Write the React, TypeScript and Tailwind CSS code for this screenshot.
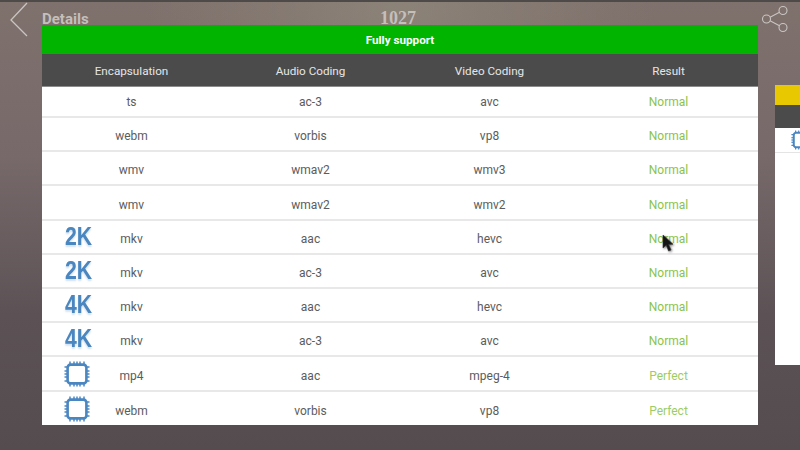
type Row = {
  badge?: '2K' | '4K' | 'chip'
  enc: string
  audio: string
  video: string
  result: string
}

const rows: Row[] = [
  { enc: 'ts', audio: 'ac-3', video: 'avc', result: 'Normal' },
  { enc: 'webm', audio: 'vorbis', video: 'vp8', result: 'Normal' },
  { enc: 'wmv', audio: 'wmav2', video: 'wmv3', result: 'Normal' },
  { enc: 'wmv', audio: 'wmav2', video: 'wmv2', result: 'Normal' },
  { badge: '2K', enc: 'mkv', audio: 'aac', video: 'hevc', result: 'Normal' },
  { badge: '2K', enc: 'mkv', audio: 'ac-3', video: 'avc', result: 'Normal' },
  { badge: '4K', enc: 'mkv', audio: 'aac', video: 'hevc', result: 'Normal' },
  { badge: '4K', enc: 'mkv', audio: 'ac-3', video: 'avc', result: 'Normal' },
  { badge: 'chip', enc: 'mp4', audio: 'aac', video: 'mpeg-4', result: 'Perfect' },
  { badge: 'chip', enc: 'webm', audio: 'vorbis', video: 'vp8', result: 'Perfect' },
]

function Chip({ size = 26 }: { size?: number }) {
  const pins = [6, 10, 13, 16, 20]
  return (
    <svg width={size} height={size} viewBox="0 0 26 26" fill="none" stroke="#4a86c0">
      <rect x="3.6" y="3.6" width="18.8" height="18.8" rx="3" strokeWidth="2.6" />
      {pins.map((p) => (
        <g key={p} strokeWidth="1.5">
          <line x1={p} y1="0.5" x2={p} y2="3" />
          <line x1={p} y1="23" x2={p} y2="25.5" />
          <line x1="0.5" y1={p} x2="3" y2={p} />
          <line x1="23" y1={p} x2="25.5" y2={p} />
        </g>
      ))}
    </svg>
  )
}

function Badge({ kind }: { kind: Row['badge'] }) {
  if (!kind) return null
  return (
    <div className="absolute left-[22px] top-0 h-full flex items-center">
      {kind === 'chip' ? (
        <Chip />
      ) : (
        <span className="w-[26px] -ml-[1px] -mt-[1px] text-center text-[25px] leading-none font-bold scale-x-[0.85] text-[#4a86c0] font-['Liberation_Sans',sans-serif] [text-shadow:0_2px_2px_rgba(74,134,192,0.25)]">
          {kind}
        </span>
      )}
    </div>
  )
}

export default function App() {
  return (
    <div className="relative w-[800px] h-[450px] overflow-hidden font-['Roboto',sans-serif] bg-[#5b5053] bg-[linear-gradient(180deg,#7f716c_0%,#77696a_35%,#5c5255_70%,#544c4f_100%)]">
      <div className="absolute inset-0 bg-[radial-gradient(ellipse_at_50%_0%,rgba(150,145,130,0.55)_0%,rgba(150,145,130,0)_45%)]" />
      <div className="absolute inset-x-0 top-0 h-[2px] bg-[#4f4a4a]" />

      <div className="relative flex h-[50px] items-start">
        <svg width="20" height="36" viewBox="0 0 20 36" fill="none" stroke="#c9c5c2" strokeWidth="1.3" className="ml-[9px] mt-[2px]">
          <path d="M18 1 L2 18 L18 34" />
        </svg>
        <span className="ml-[13px] mt-[10px] text-[15px] leading-[18px] font-bold text-[#c4bfbb]">Details</span>
        <span className="absolute left-[380px] top-[8px] text-[18px] leading-[20px] font-bold text-[#c4bfbb] font-['Liberation_Serif',serif]">1027</span>
        <svg width="30" height="30" viewBox="0 0 30 30" fill="none" stroke="#c9c5c2" strokeWidth="1.1" className="absolute left-[759px] top-[4px]">
          <circle cx="24" cy="6.5" r="4" />
          <circle cx="7.5" cy="15" r="4" />
          <circle cx="24" cy="23.5" r="4" />
          <path d="M11 13.2 L20.5 8.3 M11 16.8 L20.5 21.7" />
        </svg>
      </div>

      <div className="absolute left-[775px] top-[85px] w-[25px] h-[280px] flex flex-col bg-white">
        <div className="h-[20px] bg-[#e8c800]" />
        <div className="h-[23px] bg-[#4b4b4b]" />
        <div className="h-[25px] pl-[16px] pt-[2px] border-b border-[#e4e4e4]">
          <Chip size={20} />
        </div>
      </div>

      <div className="absolute left-[42px] top-[25px] w-[716px] h-[400px] flex flex-col bg-white">
        <div className="h-[29px] shrink-0 pt-[3px] bg-[#00b400] flex items-center justify-center text-[11.7px] font-bold text-white">
          Fully support
        </div>
        <div className="h-[32.6px] shrink-0 pt-[3px] grid grid-cols-4 items-center bg-[#4b4b4b] border-b border-[#8c8c8c] text-[11.7px] text-[#e6e6e6] text-center">
          <div>Encapsulation</div>
          <div>Audio Coding</div>
          <div>Video Coding</div>
          <div>Result</div>
        </div>
        <div>
          {rows.map((r, i) => (
            <div key={i} className="relative h-[34.2px] first:h-[31.5px] pt-[4px] first:pt-[1px] grid grid-cols-4 items-center border-b-2 border-[#e8e8e8] last:border-b-0 text-[12px] text-[#5c5c5c] text-center">
              <Badge kind={r.badge} />
              <div>{r.enc}</div>
              <div>{r.audio}</div>
              <div>{r.video}</div>
              <div className={r.result === 'Perfect' ? 'text-[#9ccc65]' : 'text-[#8bc34a]'}>{r.result}</div>
            </div>
          ))}
        </div>
      </div>

      {/* mouse pointer */}
      <svg width="14" height="20" viewBox="0 0 14 20" className="absolute left-[662px] top-[234px] drop-shadow-[1px_1px_1px_rgba(0,0,0,0.5)]">
        <path d="M1 1 L1 14 L4.2 11.2 L6.6 17 L9 16 L6.6 10.4 L11 10.2 Z" fill="#151515" stroke="#333" strokeWidth="0.6" />
      </svg>
    </div>
  )
}
